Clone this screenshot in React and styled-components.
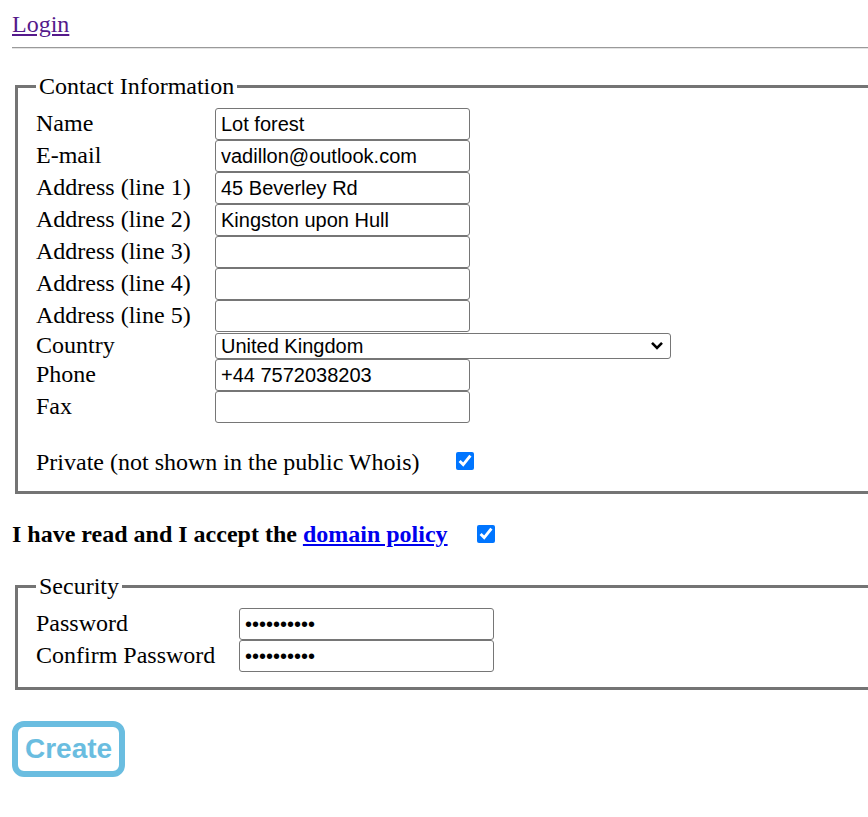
import React from "react";
import styled, { createGlobalStyle } from "styled-components";

const GlobalStyle = createGlobalStyle`
  html, body {
    margin: 0;
    overflow: hidden;
    background: #fff;
  }
  body {
    font-family: "Liberation Serif", "Times New Roman", serif;
    font-size: 24px;
    color: #000;
  }
`;

const Page = styled.div`
  width: 900px;
  padding: 11px 0 40px 12px;
`;

const TopLine = styled.div`
  line-height: normal;
`;

const LoginLink = styled.a`
  color: #551a8b;
  text-decoration: underline;
`;

const Rule = styled.hr`
  margin: 9px 0 0;
  height: 0;
  border: 0;
  border-top: 1px solid #9a9a9a;
  border-bottom: 1px solid #e4e4e4;
`;

const Fieldset = styled.fieldset`
  margin: ${(p) => p.top}px 0 0 3px;
  padding: 8px 18px 15px;
  border: 3px solid #747474;
  min-inline-size: 0;
`;

const Legend = styled.legend`
  padding: 0 3px;
  line-height: normal;
`;

const Row = styled.div`
  display: flex;
  align-items: baseline;
  line-height: normal;
`;

const Label = styled.label`
  flex: 0 0 ${(p) => p.width}px;
`;

const TextInput = styled.input`
  box-sizing: border-box;
  width: 255px;
  height: 32px;
  margin: 0;
  padding: 0 5px;
  border: 1px solid #767676;
  border-radius: 3px;
  background: #fff;
  font-family: "Liberation Sans", Arial, sans-serif;
  font-size: 20px;
  color: #000;
  outline: none;
`;

const SelectWrap = styled.span`
  position: relative;
  display: inline-block;
  width: 456px;
`;

const Select = styled.select`
  box-sizing: border-box;
  appearance: none;
  width: 100%;
  height: 26px;
  margin: 0;
  padding: 0 5px;
  border: 1px solid #767676;
  border-radius: 3px;
  background: #fff;
  font-family: "Liberation Sans", Arial, sans-serif;
  font-size: 20px;
  color: #000;
  outline: none;
`;

const Chevron = styled.svg`
  position: absolute;
  right: 7px;
  top: 9px;
  pointer-events: none;
`;

const CheckRow = styled.div`
  display: flex;
  align-items: center;
  line-height: normal;
  margin-top: ${(p) => p.top || 0}px;
  font-weight: ${(p) => (p.bold ? 700 : 400)};
`;

const Check = styled.input`
  width: 18px;
  height: 18px;
  margin: 0 0 ${(p) => p.lift || 0}px ${(p) => p.gap}px;
  accent-color: #0075ff;
`;

const PolicyLink = styled.a`
  color: #0000ee;
  text-decoration: underline;
  margin-left: 6px;
`;

const CreateButton = styled.button`
  margin-top: 31px;
  box-sizing: border-box;
  height: 56px;
  padding: 0 7px;
  border: 6px solid #6abde0;
  border-radius: 12px;
  background: #fff;
  color: #6abde0;
  font-family: "Liberation Sans", Arial, sans-serif;
  font-size: 28px;
  font-weight: 700;
  line-height: 1;
  cursor: pointer;
`;

const contactFields = [
  ["Name", "Lot forest"],
  ["E-mail", "vadillon@outlook.com"],
  ["Address (line 1)", "45 Beverley Rd"],
  ["Address (line 2)", "Kingston upon Hull"],
  ["Address (line 3)", ""],
  ["Address (line 4)", ""],
  ["Address (line 5)", ""],
];

const FieldRow = ({ label, value, width = 179, type = "text" }) => (
  <Row>
    <Label width={width}>{label}</Label>
    <TextInput type={type} defaultValue={value} />
  </Row>
);

export default function App() {
  return (
    <>
      <GlobalStyle />
      <Page>
        <TopLine>
          <LoginLink href="#login">Login</LoginLink>
        </TopLine>
        <Rule />

        <Fieldset top={24}>
          <Legend>Contact Information</Legend>
          {contactFields.map(([label, value]) => (
            <FieldRow key={label} label={label} value={value} />
          ))}
          <Row>
            <Label width={179}>Country</Label>
            <SelectWrap>
              <Select defaultValue="GB">
                <option value="GB">United Kingdom</option>
                <option value="US">United States</option>
              </Select>
              <Chevron width="14" height="9" viewBox="0 0 14 9">
                <path d="M2 1.8 L7 6.8 L12 1.8" fill="none" stroke="#000" strokeWidth="2.6" />
              </Chevron>
            </SelectWrap>
          </Row>
          <FieldRow label="Phone" value="+44 7572038203" />
          <FieldRow label="Fax" value="" />
          <CheckRow top={26}>
            <span>Private (not shown in the public Whois)</span>
            <Check type="checkbox" gap={36} lift={3} defaultChecked />
          </CheckRow>
        </Fieldset>

        <CheckRow top={27} bold>
          <span>I have read and I accept the</span>
          <PolicyLink href="#policy">domain policy</PolicyLink>
          <Check type="checkbox" gap={29} lift={2} defaultChecked />
        </CheckRow>

        <Fieldset top={25}>
          <Legend>Security</Legend>
          <FieldRow label="Password" value="1234567890" width={203} type="password" />
          <FieldRow label="Confirm Password" value="1234567890" width={203} type="password" />
        </Fieldset>

        <CreateButton type="button">Create</CreateButton>
      </Page>
    </>
  );
}
